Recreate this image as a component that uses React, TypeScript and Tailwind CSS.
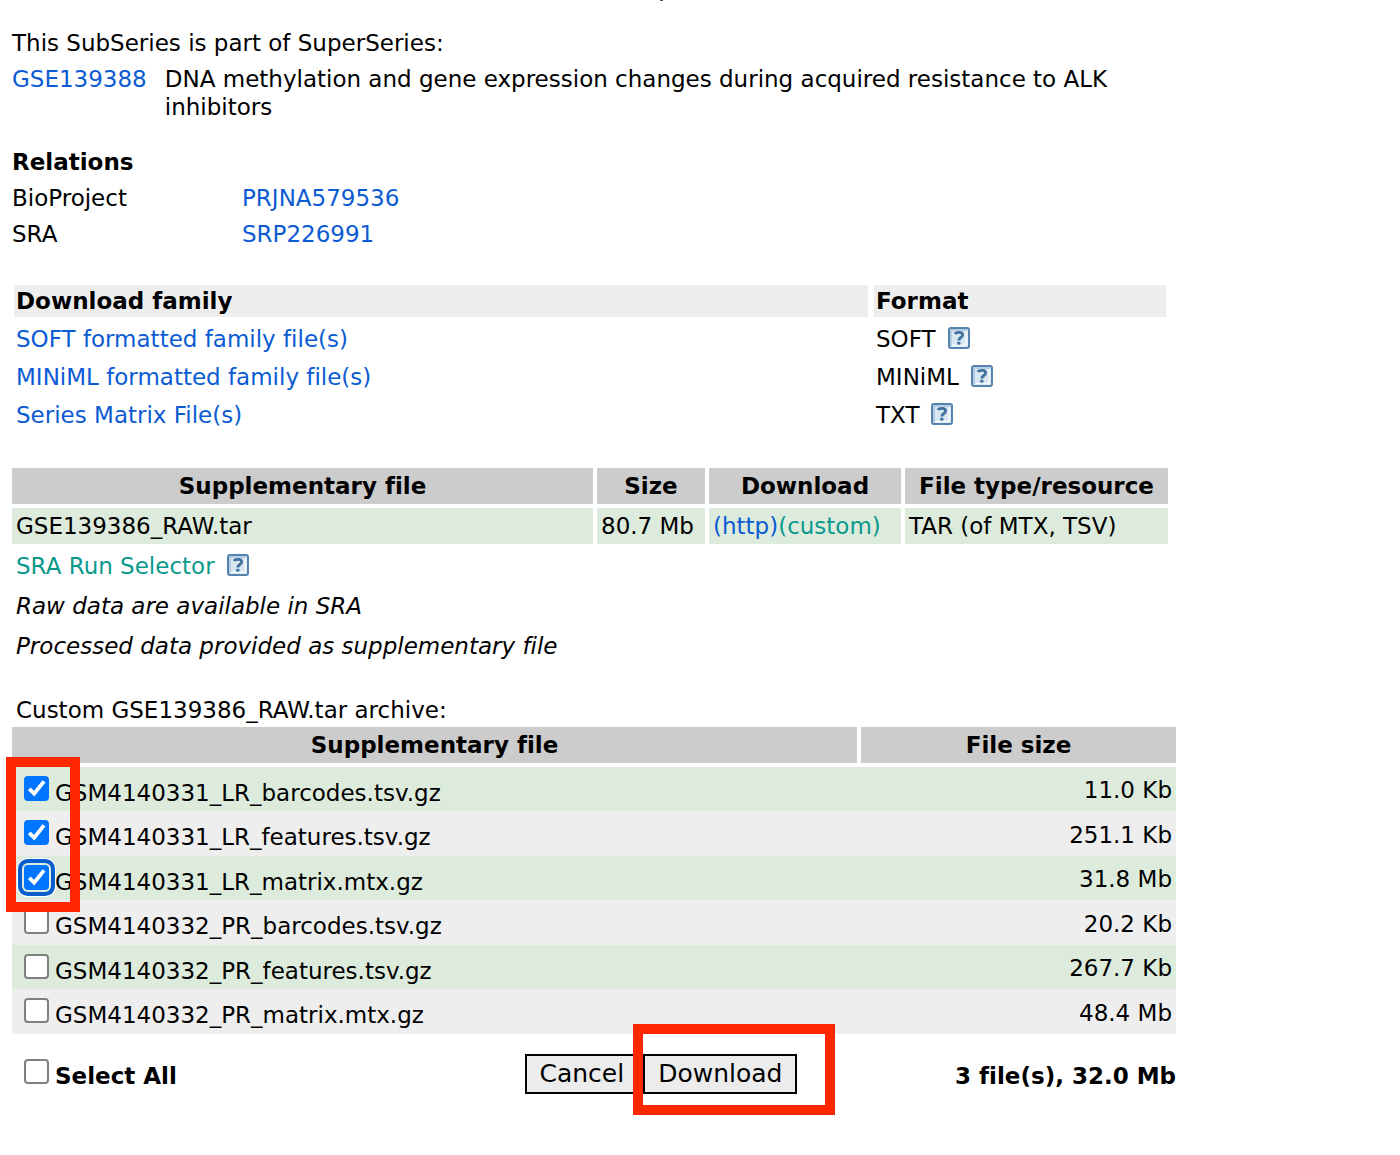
import { useState } from "react";

const files = [
  { name: "GSM4140331_LR_barcodes.tsv.gz", size: "11.0 Kb" },
  { name: "GSM4140331_LR_features.tsv.gz", size: "251.1 Kb" },
  { name: "GSM4140331_LR_matrix.mtx.gz", size: "31.8 Mb" },
  { name: "GSM4140332_PR_barcodes.tsv.gz", size: "20.2 Kb" },
  { name: "GSM4140332_PR_features.tsv.gz", size: "267.7 Kb" },
  { name: "GSM4140332_PR_matrix.mtx.gz", size: "48.4 Mb" },
];

const families = [
  { label: "SOFT formatted family file(s)", format: "SOFT" },
  { label: "MINiML formatted family file(s)", format: "MINiML" },
  { label: "Series Matrix File(s)", format: "TXT" },
];

const blue = "text-[#0b5bd3]";
const teal = "text-[#0b998d]";

function HelpIcon() {
  return (
    <button type="button" aria-label="Help" className="mt-0.5 block h-[22px] w-[22px] shrink-0">
      <svg viewBox="0 0 22 22" className="h-full w-full">
        <rect x="1" y="1" width="20" height="20" rx="2" fill="#d9e7f1" stroke="#5583b0" strokeWidth="2" />
        <path d="M3 3H19M3 3V19" stroke="#a9c6dc" strokeWidth="1.6" fill="none" />
        <path d="M18.4 4V18.4H4" stroke="#f4f9fc" strokeWidth="1.6" fill="none" />
        <path d="M6.8 6.8C8.2 5 14.6 4.4 14.6 8C14.6 10.7 10.8 10.4 10.8 13.4" stroke="#40709f" strokeWidth="2.8" fill="none" />
        <rect x="9.2" y="14.8" width="3.2" height="2.8" fill="#40709f" />
      </svg>
    </button>
  );
}

function Checkbox(props: { id: string; checked: boolean; ring?: boolean; onChange: () => void }) {
  return (
    <span className="grid h-[25px] w-[25px] shrink-0">
      <input
        id={props.id}
        type="checkbox"
        checked={props.checked}
        onChange={props.onChange}
        className={
          "peer col-start-1 row-start-1 h-[25px] w-[25px] appearance-none rounded-[4px] border-2 border-[#808080] bg-white outline-none checked:border-[#0075ff] checked:bg-[#0075ff] " +
          (props.ring ? "shadow-[0_0_0_2px_#dfecdf,0_0_0_6px_#0a5dcc,0_0_0_7px_#ffffff]" : "")
        }
      />
      <svg viewBox="0 0 25 25" className="pointer-events-none col-start-1 row-start-1 hidden h-[25px] w-[25px] peer-checked:block">
        <path d="M5.2 12.8L10.2 17.6L20 5.4" stroke="#fff" strokeWidth="3.8" fill="none" />
      </svg>
    </span>
  );
}

export default function App() {
  const [checked, setChecked] = useState([true, true, true, false, false, false]);
  const [active, setActive] = useState(2);
  const all = checked.every(Boolean);

  const toggle = (index: number) => {
    setChecked(checked.map((value, i) => (i === index ? !value : value)));
    setActive(index);
  };

  return (
    <main className="min-h-screen bg-white pb-10 font-['Verdana','DejaVu_Sans',sans-serif] text-[23px] leading-[28px] text-black [font-variant-ligatures:none]">
      <div className="h-[29px]">
        <div className="ml-[660px] h-px w-[3px] bg-neutral-600" />
      </div>
      <div className="max-w-[1188px] px-3">
        <p>This SubSeries is part of SuperSeries:</p>
        <div className="mt-2 flex gap-[18px]">
          <a href="#GSE139388" className={blue}>GSE139388</a>
          <p className="max-w-[980px]">
            DNA methylation and gene expression changes during acquired resistance to ALK inhibitors
          </p>
        </div>

        <h2 className="mt-[27px] font-bold">Relations</h2>
        <dl className="mt-2 grid grid-cols-[230px_1fr] gap-y-2">
          <dt>BioProject</dt>
          <dd><a href="#PRJNA579536" className={blue}>PRJNA579536</a></dd>
          <dt>SRA</dt>
          <dd><a href="#SRP226991" className={blue}>SRP226991</a></dd>
        </dl>

        <div className="mt-[31px] pr-2">
          <table className="w-full table-fixed border-separate border-spacing-y-[6px]">
            <colgroup>
              <col />
              <col className="w-[296px]" />
            </colgroup>
            <thead>
              <tr className="h-8 text-left">
                <th className="border-r-4 border-l-2 border-white bg-[#eeeeee] bg-clip-padding px-[2px]">Download family</th>
                <th className="border-x-2 border-white bg-[#eeeeee] bg-clip-padding px-[2px]">Format</th>
              </tr>
            </thead>
            <tbody>
              {families.map((family) => (
                <tr key={family.format} className="h-8">
                  <td className="px-1"><a href="#family" className={blue}>{family.label}</a></td>
                  <td className="px-1">
                    <div className="flex items-start gap-3">{family.format}<HelpIcon /></div>
                  </td>
                </tr>
              ))}
            </tbody>
          </table>
        </div>

        <div className="mt-[31px] pr-2">
          <table className="w-full table-fixed border-separate border-spacing-0">
            <colgroup>
              <col />
              <col className="w-[112px]" />
              <col className="w-[196px]" />
              <col className="w-[263px]" />
            </colgroup>
            <thead>
              <tr className="h-10">
                <th className="border-r-4 border-b-4 border-white bg-[#cccccc] bg-clip-padding">Supplementary file</th>
                <th className="border-r-4 border-b-4 border-white bg-[#cccccc] bg-clip-padding">Size</th>
                <th className="border-r-4 border-b-4 border-white bg-[#cccccc] bg-clip-padding">Download</th>
                <th className="border-b-4 border-white bg-[#cccccc] bg-clip-padding">File type/resource</th>
              </tr>
            </thead>
            <tbody>
              <tr className="h-10 whitespace-nowrap">
                <td className="border-r-4 border-b-4 border-white bg-[#ddebdc] bg-clip-padding pl-1">GSE139386_RAW.tar</td>
                <td className="border-r-4 border-b-4 border-white bg-[#ddebdc] bg-clip-padding pl-1">80.7 Mb</td>
                <td className="border-r-4 border-b-4 border-white bg-[#ddebdc] bg-clip-padding pl-1">
                  <a href="#http" className={blue}>(http)</a><a href="#custom" className={teal}>(custom)</a>
                </td>
                <td className="border-b-4 border-white bg-[#ddebdc] bg-clip-padding pl-1">TAR (of MTX, TSV)</td>
              </tr>
            </tbody>
          </table>
          <div className="flex flex-col gap-3 pt-1 pl-1">
            <div className="flex items-start gap-3">
              <a href="#sra" className={teal}>SRA Run Selector</a>
              <HelpIcon />
            </div>
            <p className="italic">Raw data are available in SRA</p>
            <p className="italic">Processed data provided as supplementary file</p>
          </div>
        </div>

        <p className="mt-9 pl-1">Custom GSE139386_RAW.tar archive:</p>
        <div className="relative mt-[3px]">
          <table className="w-full table-fixed border-separate border-spacing-0">
            <colgroup>
              <col />
              <col className="w-[315px]" />
            </colgroup>
            <thead>
              <tr className="h-10">
                <th className="border-r-4 border-b-4 border-white bg-[#cccccc] bg-clip-padding">Supplementary file</th>
                <th className="border-b-4 border-white bg-[#cccccc] bg-clip-padding">File size</th>
              </tr>
            </thead>
            <tbody>
              {files.map((file, i) => (
                <tr key={file.name} className="h-[44px] bg-[#ddebdc] even:h-[45px] even:bg-[#eeeeee]">
                  <td className="pt-1 pl-3">
                    <div className="flex items-start gap-[6px]">
                      <Checkbox id={file.name} checked={checked[i]} ring={active === i} onChange={() => toggle(i)} />
                      <label htmlFor={file.name} className="pt-[3px]">{file.name}</label>
                    </div>
                  </td>
                  <td className="pt-0.5 pr-1 text-right">{file.size}</td>
                </tr>
              ))}
            </tbody>
          </table>
          <div className="pointer-events-none absolute top-[30px] -left-[6px] h-[155px] w-[74px] border-[10px] border-[#ff2600]" />
        </div>

        <div className="mt-5 grid grid-cols-[1fr_auto_1fr] items-center font-bold">
          <div className="flex items-start gap-[6px] pl-3">
            <Checkbox id="select-all" checked={all} onChange={() => setChecked(files.map(() => !all))} />
            <label htmlFor="select-all" className="pt-[3px]">Select All</label>
          </div>
          <div className="flex gap-1 pl-[134px] text-[25px] font-normal">
            <button type="button" className="h-10 border-2 border-black bg-[#ececec] px-[13px]">Cancel</button>
            <div className="relative">
              <button type="button" className="h-10 border-2 border-black bg-[#ececec] px-[13px]">Download</button>
              <div className="pointer-events-none absolute -top-[30px] -left-[10px] h-[91px] w-[202px] border-[10px] border-[#ff2600]" />
            </div>
          </div>
          <p className="pt-1 text-right">3 file(s), 32.0 Mb</p>
        </div>
      </div>
    </main>
  );
}
